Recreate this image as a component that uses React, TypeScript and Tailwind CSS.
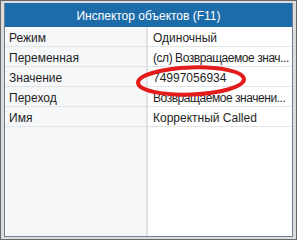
const rows: [string, string, boolean][] = [
    ['Режим', 'Одиночный', false],
    ['Переменная', '(сл) Возвращаемое знач...', true],
    ['Значение', '74997056934', false],
    ['Переход', 'Возвращаемое значени...', true],
    ['Имя', 'Корректный Called', false],
];

export default function App() {
    return (
        <div
            className="w-[297px] h-[240px] border border-[#6a6a6a] bg-[#dcdcdc] px-[3px] pt-[2px] pb-[2px] text-[12px] text-[#1e1e1e]"
            style={{ fontFamily: '"Liberation Sans", Arial, sans-serif' }}
        >
            <div className="relative flex h-full flex-col border border-[#6f8190] border-t-[#1c6ca9] bg-white">
                <div className="flex h-[23px] shrink-0 items-center justify-center bg-[#1c6ca9] pt-[1px] text-white">
                    Инспектор объектов (F11)
                </div>
                <div className="flex flex-1">
                    <div className="w-[141px] shrink-0 bg-[#f5f7f9]">
                        {rows.map(([label]) => (
                            <div
                                key={label}
                                className="flex h-[20px] items-center border-b border-[#e2e4e6] pl-[4px] pt-[2px]"
                            >
                                {label}
                            </div>
                        ))}
                    </div>
                    <div className="w-[2px] shrink-0 bg-[#e2e2e2]" />
                    <div className="min-w-0 flex-1 overflow-hidden">
                        {rows.map(([label, value, long]) => (
                            <div
                                key={label}
                                className={
                                    long
                                        ? 'flex h-[20px] items-center whitespace-nowrap border-b border-[#e2e4e6] pl-[5px] pt-[2px] tracking-[-0.45px]'
                                        : 'flex h-[20px] items-center whitespace-nowrap border-b border-[#e2e4e6] pl-[5px] pt-[2px]'
                                }
                            >
                                {value}
                            </div>
                        ))}
                    </div>
                </div>

                {/* red annotation drawn over the value */}
                <svg
                    className="pointer-events-none absolute left-[121px] top-[58px]"
                    width="130"
                    height="40"
                    viewBox="0 0 130 40"
                >
                    <ellipse
                        cx="65"
                        cy="19"
                        rx="53"
                        ry="13.5"
                        fill="none"
                        stroke="#e41b1b"
                        strokeWidth="4"
                        transform="rotate(-2 65 19)"
                    />
                </svg>
            </div>
        </div>
    );
}
